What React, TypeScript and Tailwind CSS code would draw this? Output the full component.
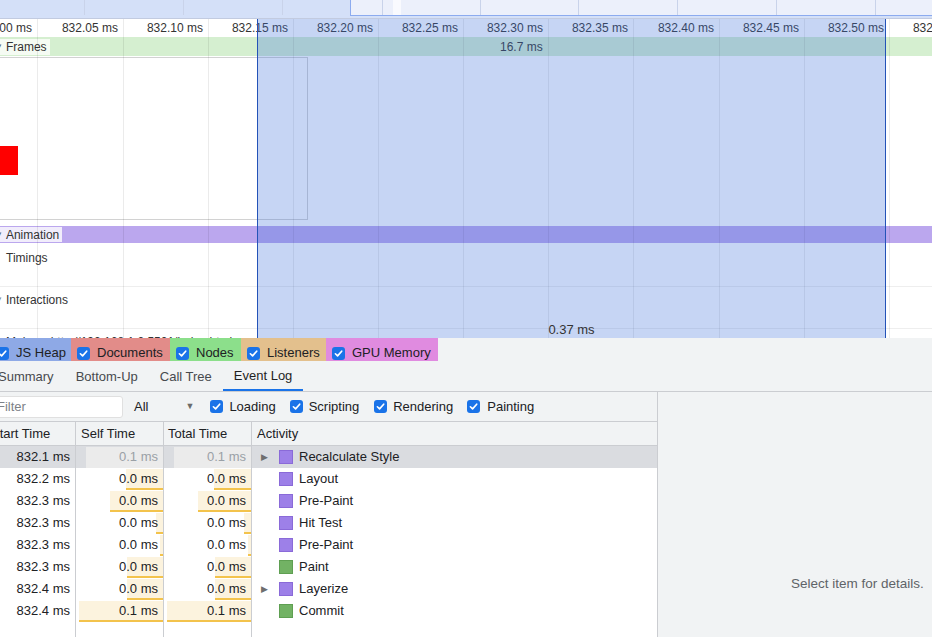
import React from "react";

const rulerLines = [37, 123, 208, 293, 378, 463, 548, 633, 719, 804, 889, 974];
const overviewLines = [84, 183, 282, 382, 480, 578, 677, 776, 875];

type Row = {
  start: string;
  time: string;
  bar: number;
  name: string;
  green?: boolean;
  arrow?: boolean;
  selected?: boolean;
};

const rows: Row[] = [
  { start: "832.1 ms", time: "0.1 ms", bar: 77, name: "Recalculate Style", arrow: true, selected: true },
  { start: "832.2 ms", time: "0.0 ms", bar: 37, name: "Layout" },
  { start: "832.3 ms", time: "0.0 ms", bar: 53, name: "Pre-Paint" },
  { start: "832.3 ms", time: "0.0 ms", bar: 7, name: "Hit Test" },
  { start: "832.3 ms", time: "0.0 ms", bar: 3, name: "Pre-Paint" },
  { start: "832.3 ms", time: "0.0 ms", bar: 36, name: "Paint", green: true },
  { start: "832.4 ms", time: "0.0 ms", bar: 36, name: "Layerize", arrow: true },
  { start: "832.4 ms", time: "0.1 ms", bar: 84, name: "Commit", green: true },
];

function Check() {
  return (
    <span className="inline-flex h-[13px] w-[13px] shrink-0 items-center justify-center rounded-[3px] bg-[#1a73e8]">
      <svg viewBox="0 0 12 12" className="h-[11px] w-[11px]">
        <path
          d="M2.6 6.3 L5 8.6 L9.5 3.5"
          fill="none"
          stroke="white"
          strokeWidth="1.8"
          strokeLinecap="round"
          strokeLinejoin="round"
        />
      </svg>
    </span>
  );
}

function TimeCell({ row }: { row: Row }) {
  return (
    <div className="relative w-[88px] shrink-0 border-r border-[#cbcdd1] pr-[5px] text-right">
      {row.selected ? (
        <div className="absolute right-0 top-[1px] bottom-0 bg-[#ebebeb]" style={{ width: row.bar }} />
      ) : (
        <div
          className="absolute right-0 top-[1px] bottom-0 border-b-2 border-[#f3c34c] bg-[#fcf3de]"
          style={{ width: row.bar }}
        />
      )}
      <span className={`relative ${row.selected ? "text-[#9aa0a6]" : ""}`}>{row.time}</span>
    </div>
  );
}

export default function App() {
  return (
    <div className="h-[637px] w-[932px] overflow-hidden bg-white font-['Liberation_Sans',Arial,sans-serif] text-[#202124]">
      {/* Overview strip */}
      <div className="relative h-[19px] overflow-hidden border-b border-[#c2cbe0] bg-[#d4e0f8]">
        <div className="absolute left-[350px] right-0 top-0 h-[16px] border-b border-l border-[#8cabef] bg-[#ecf0fb]" />
        <div className="absolute left-[393px] top-0 h-[15px] w-[8px] bg-[#f9fafe]" />
        {overviewLines.map((x) => (
          <div key={x} className="absolute top-0 h-[15px] w-px bg-[#c9d3ea]" style={{ left: x }} />
        ))}
      </div>

      {/* Timeline */}
      <div className="relative h-[319px] overflow-hidden bg-white text-[12px] text-[#333]">
        {/* ruler */}
        <div className="relative h-[18px]">
          {rulerLines.map((x, k) => (
            <div
              key={x}
              className="absolute top-0 w-[100px] whitespace-nowrap text-right leading-[18px]"
              style={{ left: x - 105 }}
            >
              832.{String(k * 5).padStart(2, "0")} ms
            </div>
          ))}
        </div>

        {/* frames */}
        <div className="relative flex h-[19px] items-center bg-[#d5efd0]">
          <div className="ml-[-6px] flex h-[16px] items-center gap-[3px] bg-white/75 pl-[1px] pr-[3px]">
            <span className="text-[8px] text-[#666]">▼</span>
            <span>Frames</span>
          </div>
          <span className="absolute left-[500px] top-[2px] leading-[16px]">16.7 ms</span>
        </div>

        {/* screenshot area */}
        <div className="h-[170px] pt-[1px]">
          <div className="relative ml-[-1px] h-[163px] w-[309px] border border-[#d2d2d2]">
            <div className="absolute left-0 top-[88px] h-[29px] w-[18px] bg-[#ff0000]" />
          </div>
        </div>

        {/* animation */}
        <div className="flex h-[17px] items-center bg-[#bba7ee]">
          <div className="ml-[-6px] flex h-[15px] items-center gap-[3px] bg-[#f1edfb] pl-[1px] pr-[3px]">
            <span className="text-[8px] text-[#666]">▼</span>
            <span>Animation</span>
          </div>
        </div>

        {/* timings */}
        <div className="h-[44px] border-b border-[#eeeeee] pl-[6px] pt-[7px] leading-[16px]">Timings</div>

        {/* interactions */}
        <div className="flex h-[42px] items-start gap-[3px] border-b border-[#eeeeee] pt-[5px] leading-[16px]">
          <span className="ml-[-5px] text-[8px] text-[#888]">▼</span>
          <span>Interactions</span>
        </div>

        {/* main track, cut off by the panel below */}
        <div className="ml-[6px] mt-[5px] h-[4px] overflow-hidden whitespace-nowrap leading-[16px]">
          Main — http://192.168.1.2:5501/index.html
        </div>

        {/* grid lines */}
        {rulerLines.map((x) => (
          <div key={x} className="absolute top-0 bottom-0 w-px bg-black/[0.08]" style={{ left: x }} />
        ))}

        {/* selection */}
        <div className="absolute left-[257px] top-0 bottom-0 w-[629px] border-x border-[#2453b8] bg-[#4273dc]/30">
          <div className="absolute bottom-0 left-0 right-0 text-center text-[13px] leading-[16px] text-[#333]">
            0.37 ms
          </div>
        </div>
      </div>

      {/* Counters */}
      <div className="flex h-[23px] items-center bg-[#f1f3f4] text-[13px] text-[#202124]">
        <div className="ml-[-10px] flex h-full w-[81px] items-center gap-[7px] bg-[#8ea9e6] pl-[6px] pt-[7px]">
          <Check />
          <span>JS Heap</span>
        </div>
        <div className="flex h-full w-[99px] items-center gap-[7px] bg-[#e28c89] pl-[6px] pt-[7px]">
          <Check />
          <span>Documents</span>
        </div>
        <div className="flex h-full w-[71px] items-center gap-[7px] bg-[#8cdf8b] pl-[6px] pt-[7px]">
          <Check />
          <span>Nodes</span>
        </div>
        <div className="flex h-full w-[85px] items-center gap-[7px] bg-[#e3c08d] pl-[6px] pt-[7px]">
          <Check />
          <span>Listeners</span>
        </div>
        <div className="flex h-full w-[112px] items-center gap-[7px] bg-[#e08be0] pl-[6px] pt-[7px]">
          <Check />
          <span>GPU Memory</span>
        </div>
      </div>

      {/* Tabs */}
      <div className="flex h-[31px] border-b border-[#cbcdd1] bg-[#f1f3f4] text-[13px] text-[#474a4e]">
        <div className="ml-[-13px] flex h-full items-center px-[11px] pt-[2px]">Summary</div>
        <div className="flex h-full items-center px-[11px] pt-[2px]">Bottom-Up</div>
        <div className="flex h-full items-center px-[11px] pt-[2px]">Call Tree</div>
        <div className="flex h-full items-center border-b-2 border-[#1a73e8] px-[11px] pt-[2px] text-[#1f1f1f]">
          Event Log
        </div>
      </div>

      {/* Bottom */}
      <div className="flex h-[245px] text-[13px]">
        <div className="flex w-[657px] shrink-0 flex-col">
          {/* toolbar */}
          <div className="flex h-[30px] shrink-0 items-center border-b border-[#cbcdd1] bg-[#f1f3f4]">
            <div className="ml-[-20px] flex h-[22px] w-[143px] items-center rounded-[3px] border border-[#e0e0e0] bg-white pl-[16px] text-[#7d8187]">
              Filter
            </div>
            <span className="ml-[11px]">All</span>
            <span className="ml-[37px] text-[9px] text-[#6b6b6b]">▼</span>
            <div className="ml-[16px] flex items-center gap-[6px]">
              <Check />
              <span>Loading</span>
            </div>
            <div className="ml-[14px] flex items-center gap-[6px]">
              <Check />
              <span>Scripting</span>
            </div>
            <div className="ml-[15px] flex items-center gap-[6px]">
              <Check />
              <span>Rendering</span>
            </div>
            <div className="ml-[14px] flex items-center gap-[7px]">
              <Check />
              <span>Painting</span>
            </div>
          </div>

          {/* header */}
          <div className="flex h-[24px] shrink-0 items-center border-b border-[#cbcdd1] bg-[#f1f3f4]">
            <div className="ml-[-14px] flex h-full w-[90px] shrink-0 items-center border-r border-[#cbcdd1] pl-[5px]">
              Start Time
            </div>
            <div className="flex h-full w-[88px] shrink-0 items-center border-r border-[#cbcdd1] pl-[5px]">
              Self Time
            </div>
            <div className="flex h-full w-[88px] shrink-0 items-center border-r border-[#cbcdd1] pl-[4px]">
              Total Time
            </div>
            <div className="pl-[5px]">Activity</div>
          </div>

          {/* rows */}
          {rows.map((r, i) => (
            <div
              key={i}
              className={`flex h-[22px] shrink-0 items-center leading-[22px] ${r.selected ? "bg-[#dadce0]" : "bg-white"}`}
            >
              <div className="ml-[-14px] w-[90px] shrink-0 border-r border-[#cbcdd1] pr-[5px] text-right">
                {r.start}
              </div>
              <TimeCell row={r} />
              <TimeCell row={r} />
              <div className="flex items-center">
                <span className="w-[27px] pl-[9px] text-[9px] text-[#6e6e6e]">{r.arrow ? "▶" : ""}</span>
                <span
                  className={`h-[14px] w-[14px] border ${
                    r.green ? "border-[#5f9f52] bg-[#72b264]" : "border-[#8a6ad8] bg-[#9d80e8]"
                  }`}
                />
                <span className="ml-[6px]">{r.name}</span>
              </div>
            </div>
          ))}

          {/* filler */}
          <div className="flex flex-1 bg-white">
            <div className="ml-[-14px] w-[90px] shrink-0 border-r border-[#cbcdd1]" />
            <div className="w-[88px] shrink-0 border-r border-[#cbcdd1]" />
            <div className="w-[88px] shrink-0 border-r border-[#cbcdd1]" />
          </div>
        </div>

        {/* details */}
        <div className="flex-1 overflow-hidden whitespace-nowrap border-l border-[#cbcdd1] bg-[#f1f3f4] pl-[133px] pt-[182px] text-[13.5px] text-[#5f6368]">
          Select item for details.
        </div>
      </div>
    </div>
  );
}
